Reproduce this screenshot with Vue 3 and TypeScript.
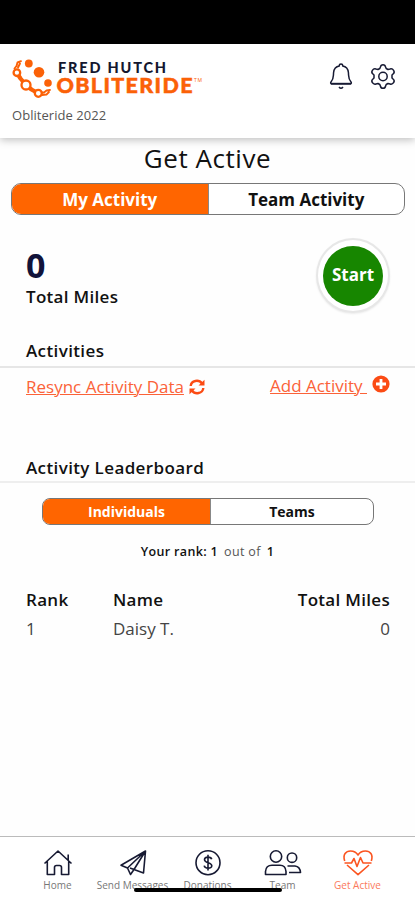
<script setup lang="ts">
import { ref } from 'vue'

interface Entry {
  rank: number
  name: string
  miles: number
}

const view = ref<'mine' | 'team'>('mine')
const board = ref<'people' | 'teams'>('people')
const miles = ref<number>(0)
const entries: Entry[] = [{ rank: 1, name: 'Daisy T.', miles: 0 }]
</script>

<template>
  <div class="screen">
    <div class="status-bar"></div>
    <header class="header">
      <div class="header-row">
        <svg class="logo" width="192" height="44" viewBox="0 0 192 44">
          <g stroke="#fb6107" stroke-linecap="round" stroke-linejoin="round" fill="none">
            <path d="M9 4.200L5.500 5.500L4.500 9L2.500 11.500M8 6.500L6 10.500" stroke-width="1.900" />
            <path d="M4.700 15.700L8.500 21.500L14 28L19.500 32.500L26.300 36.300" stroke-width="4.200" />
            <path d="M29 35.500L32 35.500L34.500 33.500L38 33M30 38L34.500 37.500L37 35" stroke-width="1.800" />
          </g>
          <g fill="#fff" stroke="#fb6107" stroke-width="2.300">
            <circle cx="4.900" cy="15.700" r="3.300" />
            <circle cx="14" cy="28" r="4.500" />
            <circle cx="26.300" cy="36.300" r="3.500" />
          </g>
          <g fill="#fb6107">
            <circle cx="16.800" cy="6.500" r="3.900" />
            <circle cx="27" cy="15.300" r="5.300" />
            <circle cx="36" cy="26" r="3.800" />
          </g>
          <text x="46" y="15.500" class="logo-top" textLength="108">FRED HUTCH</text>
          <text x="44.500" y="36" class="logo-main" textLength="136">OBLITERIDE</text>
          <text x="182" y="25" class="logo-tm" textLength="8">TM</text>
        </svg>
        <div class="header-actions">
          <svg width="24" height="28" viewBox="0 0 24 28" fill="none" stroke="#171a33" stroke-width="1.500" stroke-linejoin="round">
            <path d="M2.500 20.700C1.500 20.700 1.500 19.700 2 19C5 15.500 4.200 13.500 4.600 9.500C5 5.500 7.500 3.500 10.300 3V2.300C10.300 .7 13.700 .7 13.700 2.300V3C16.500 3.500 19 5.500 19.400 9.500C19.800 13.500 19 15.500 22 19C22.500 19.700 22.500 20.700 21.500 20.700Z" />
            <path d="M2 20.700H22" stroke-width="1.800" />
            <path d="M10 24Q12 26.500 14 24" />
          </svg>
          <svg width="26" height="28" viewBox="0 0 26 28" fill="none" stroke="#171a33" stroke-width="1.500" stroke-linejoin="round">
            <path d="M10.400 4Q10.800 1.700 13 1.700T15.600 4L16.200 5.500L18 6.500L20 6Q22.300 5.300 23.600 7.300T23.300 10.700L22 12V15L23.300 16.300Q24.900 17.700 23.600 19.700T20 21L18 20.500L16.200 21.500L15.600 23Q15.200 25.300 13 25.300T10.400 23L9.800 21.500L8 20.500L6 21Q3.700 21.700 2.400 19.700T2.700 16.300L4 15V12L2.700 10.700Q1.100 9.300 2.400 7.300T6 6L8 6.500L9.800 5.500Z" />
            <circle cx="13" cy="13.500" r="4.200" />
          </svg>
        </div>
      </div>
      <div class="event">Obliteride 2022</div>
    </header>

    <main class="content">
      <h1 class="title">Get Active</h1>
      <div class="toggle toggle-main">
        <button :class="{ active: view === 'mine' }" @click="view = 'mine'">My Activity</button>
        <button :class="{ active: view === 'team' }" @click="view = 'team'">Team Activity</button>
      </div>

      <section class="summary">
        <div>
          <div class="miles">{{ miles }}</div>
          <div class="miles-label">Total Miles</div>
        </div>
        <button class="start"><span>Start</span></button>
      </section>

      <h2 class="heading activities">Activities</h2>
      <div class="links">
        <a class="link resync"><span>Resync Activity Data</span>
          <svg width="16" height="16" viewBox="0 0 16 16" fill="none" stroke="#fb4b14" stroke-width="2.400">
            <path d="M1.700 7C2.200 1.200 10 .2 13 4.500M14.300 9C13.800 14.800 6 15.800 3 11.500" />
            <path d="M15.500 .8V6.500H9.500ZM.5 15.200V9.500H6.500Z" fill="#fb4b14" stroke="none" />
          </svg>
        </a>
        <a class="link add"><span>Add Activity&nbsp;</span>
          <svg width="18" height="18" viewBox="0 0 18 18">
            <circle cx="9" cy="9" r="8.600" fill="#fb4b14" />
            <path d="M9 4V14M4 9H14" stroke="#fff" stroke-width="2.800" />
          </svg>
        </a>
      </div>

      <h2 class="heading leaderboard">Activity Leaderboard</h2>
      <div class="toggle toggle-board">
        <button :class="{ active: board === 'people' }" @click="board = 'people'">Individuals</button>
        <button :class="{ active: board === 'teams' }" @click="board = 'teams'">Teams</button>
      </div>
      <p class="your-rank"><b>Your rank: 1</b><span>out of</span><b>1</b></p>

      <div class="table">
        <div class="row head"><span>Rank</span><span>Name</span><span>Total Miles</span></div>
        <div v-for="e in entries" :key="e.rank" class="row">
          <span>{{ e.rank }}</span><span>{{ e.name }}</span><span>{{ e.miles }}</span>
        </div>
      </div>
    </main>

    <nav class="nav">
      <a class="tab">
        <svg width="40" height="28" viewBox="0 0 40 28">
          <path d="M6.500 14.500L20 2L33.500 14.500M30.200 11.500V5.500M9.300 12.500V25.500H16.500V18.500Q16.500 16.500 18.500 16.500H21.500Q23.500 16.500 23.500 18.500V25.500H30.700V12.500" />
        </svg>
        <span>Home</span>
      </a>
      <a class="tab">
        <svg width="40" height="28" viewBox="0 0 40 28">
          <path d="M32.500 2L8 16.200L14.500 19L32.500 2L30.500 24L21 20.500L32.500 2M14.500 19L17.500 25.500L21 20.500L17 19" />
        </svg>
        <span>Send Messages</span>
      </a>
      <a class="tab">
        <svg width="40" height="28" viewBox="0 0 40 28">
          <circle cx="20" cy="13.700" r="12" />
          <path d="M23.700 10.300C23 7.300 16.500 7.300 16.500 10.700S23.800 13.300 23.800 16.700S16.800 20 16.200 16.700M20 5.800V21.600" />
        </svg>
        <span>Donations</span>
      </a>
      <a class="tab">
        <svg width="40" height="28" viewBox="0 0 40 28">
          <circle cx="13" cy="7.500" r="5.700" />
          <path d="M2.500 25.500V22.500Q3 16.300 9 16.300H17Q22.500 16.300 23 22.500V25.500Z" />
          <circle cx="29" cy="8.700" r="4.700" />
          <path d="M24.500 17H32Q37 17.500 37.500 23.500H26" />
        </svg>
        <span>Team</span>
      </a>
      <a class="tab current">
        <svg width="40" height="28" viewBox="0 0 40 28">
          <path d="M6.700 12C4.500 5.500 8 2 12.500 2Q17.500 2 20 6Q22.500 2 27.500 2C32 2 35.500 5.500 33.300 12M9 16L20 25.700L31 16M6.500 14H13.500L16 9.500L19 17.500L22.500 8.500L25 14H33.500" />
        </svg>
        <span>Get Active</span>
      </a>
      <div class="home-indicator"></div>
    </nav>
  </div>
</template>

<style>
body {
  margin: 0;
  background: #fff;
}
</style>

<style scoped>
* {
  box-sizing: border-box;
}
.screen {
  display: flex;
  flex-direction: column;
  height: 900px;
  overflow: hidden;
  background: #fefefe;
  color: #111;
  font-family: 'Open Sans', sans-serif;
}
button {
  font: inherit;
  border: 0;
  padding: 0;
  background: none;
  color: inherit;
}
h1, h2, p {
  margin: 0;
}
.status-bar {
  height: 44px;
  flex: none;
  background: #000;
}
.header {
  flex: none;
  height: 94px;
  padding: 13px 19px 0 12px;
  background: #fff;
  box-shadow: 0 2px 8px rgba(0, 0, 0, 0.25);
}
.header-row {
  display: flex;
  justify-content: space-between;
}
.logo-top,
.logo-main {
  font-family: Lato, sans-serif;
  font-weight: 900;
}
.logo-top {
  font-size: 14.5px;
  fill: #14172f;
}
.logo-main {
  font-size: 21.5px;
  fill: #fb6107;
  stroke: #fb6107;
  stroke-width: 0.5px;
}
.logo-tm {
  font-size: 5px;
  fill: #fb6107;
}
.header-actions {
  display: flex;
  gap: 17px;
  padding-top: 6px;
}
.event {
  margin-top: 5px;
  font-size: 13px;
  line-height: 18px;
  letter-spacing: 0.05px;
  color: #555;
}
.content {
  flex: 1;
  display: flex;
  flex-direction: column;
}
.title {
  margin-top: 3px;
  font-size: 26px;
  line-height: 34px;
  letter-spacing: 0.55px;
  font-weight: 400;
  text-align: center;
}
.toggle {
  display: flex;
  flex: none;
  border: 1px solid #777;
  background: #fff;
  font-weight: 700;
  overflow: hidden;
}
.toggle button {
  flex: 1;
}
.toggle .active {
  background: #ff6500;
  color: #fff;
  border-right: 1px solid #888;
}
.toggle-main {
  height: 32px;
  margin: 8px 10px 0 11px;
  border-radius: 10px;
  font-size: 17px;
}
.toggle-board {
  height: 27px;
  margin: 15px 41px 0 42px;
  border-radius: 8px;
  font-size: 14px;
}
.toggle-board .active {
  flex: none;
  width: 168px;
}
.summary {
  display: flex;
  justify-content: space-between;
  height: 124px;
  padding: 23px 25px 0 26px;
}
.miles {
  height: 46px;
  padding-top: 4px;
  font-size: 34px;
  line-height: 46px;
  font-weight: 700;
  color: #11133a;
}
.miles-label {
  margin-top: 1px;
  font-size: 17px;
  line-height: 24px;
  letter-spacing: 0.3px;
  font-weight: 600;
}
.start {
  width: 74px;
  height: 75px;
  padding: 5px;
  border: 2px solid #e7e7e7;
  border-radius: 50%;
  background: #fff;
  box-shadow: 0 1px 2px rgba(0, 0, 0, 0.08);
}
.start span {
  display: flex;
  align-items: center;
  justify-content: center;
  height: 60px;
  padding-bottom: 2px;
  border-radius: 50%;
  background: #178600;
  color: #fff;
  font-size: 17px;
  font-weight: 700;
}
.heading {
  flex: none;
  padding-left: 26px;
  border-bottom: 2px solid #e6e6e6;
  font-size: 17px;
  line-height: 24px;
  letter-spacing: 0.38px;
  font-weight: 600;
}
.activities {
  height: 29px;
}
.links {
  display: flex;
  justify-content: space-between;
  height: 88px;
  padding: 6px 25px 0 26px;
}
.link {
  display: flex;
  gap: 5px;
  font-size: 17px;
  line-height: 24px;
  color: #fb6238;
}
.link span {
  text-decoration: underline;
  text-decoration-thickness: 1px;
}
.resync {
  padding-top: 1px;
}
.resync svg {
  margin-top: 4px;
}
.add svg {
  margin-top: 1px;
}
.leaderboard {
  height: 27px;
  border-color: #eee;
}
.your-rank {
  display: flex;
  justify-content: center;
  gap: 6px;
  margin-top: 18px;
  font-size: 12.5px;
  line-height: 18px;
  letter-spacing: 0.35px;
  color: #555;
}
.your-rank b {
  color: #111;
  font-weight: 600;
}
.table {
  padding: 24px 25px 0 26px;
}
.row {
  display: grid;
  grid-template-columns: 87px 1fr 1fr;
  font-size: 17px;
  line-height: 29px;
  color: #444;
}
.row span:last-child {
  text-align: right;
}
.head {
  color: #111;
  font-weight: 600;
  letter-spacing: 0.3px;
}
.nav {
  position: relative;
  display: flex;
  flex: none;
  height: 64px;
  padding: 12px 20px 0;
  border-top: 1px solid #bbb;
  background: #fff;
}
.tab {
  flex: 1;
  display: flex;
  flex-direction: column;
  align-items: center;
  color: #171a33;
}
.tab svg {
  fill: none;
  stroke: currentColor;
  stroke-width: 1.6;
  stroke-linejoin: round;
}
.tab span {
  margin-top: 1px;
  font-size: 10px;
  line-height: 14px;
  color: #777;
  white-space: nowrap;
}
.current {
  color: #fb5420;
}
.current span {
  color: #fb7a5c;
}
.home-indicator {
  position: absolute;
  left: 134px;
  top: 51px;
  width: 148px;
  height: 4px;
  border-radius: 2px;
  background: #000;
}
</style>
